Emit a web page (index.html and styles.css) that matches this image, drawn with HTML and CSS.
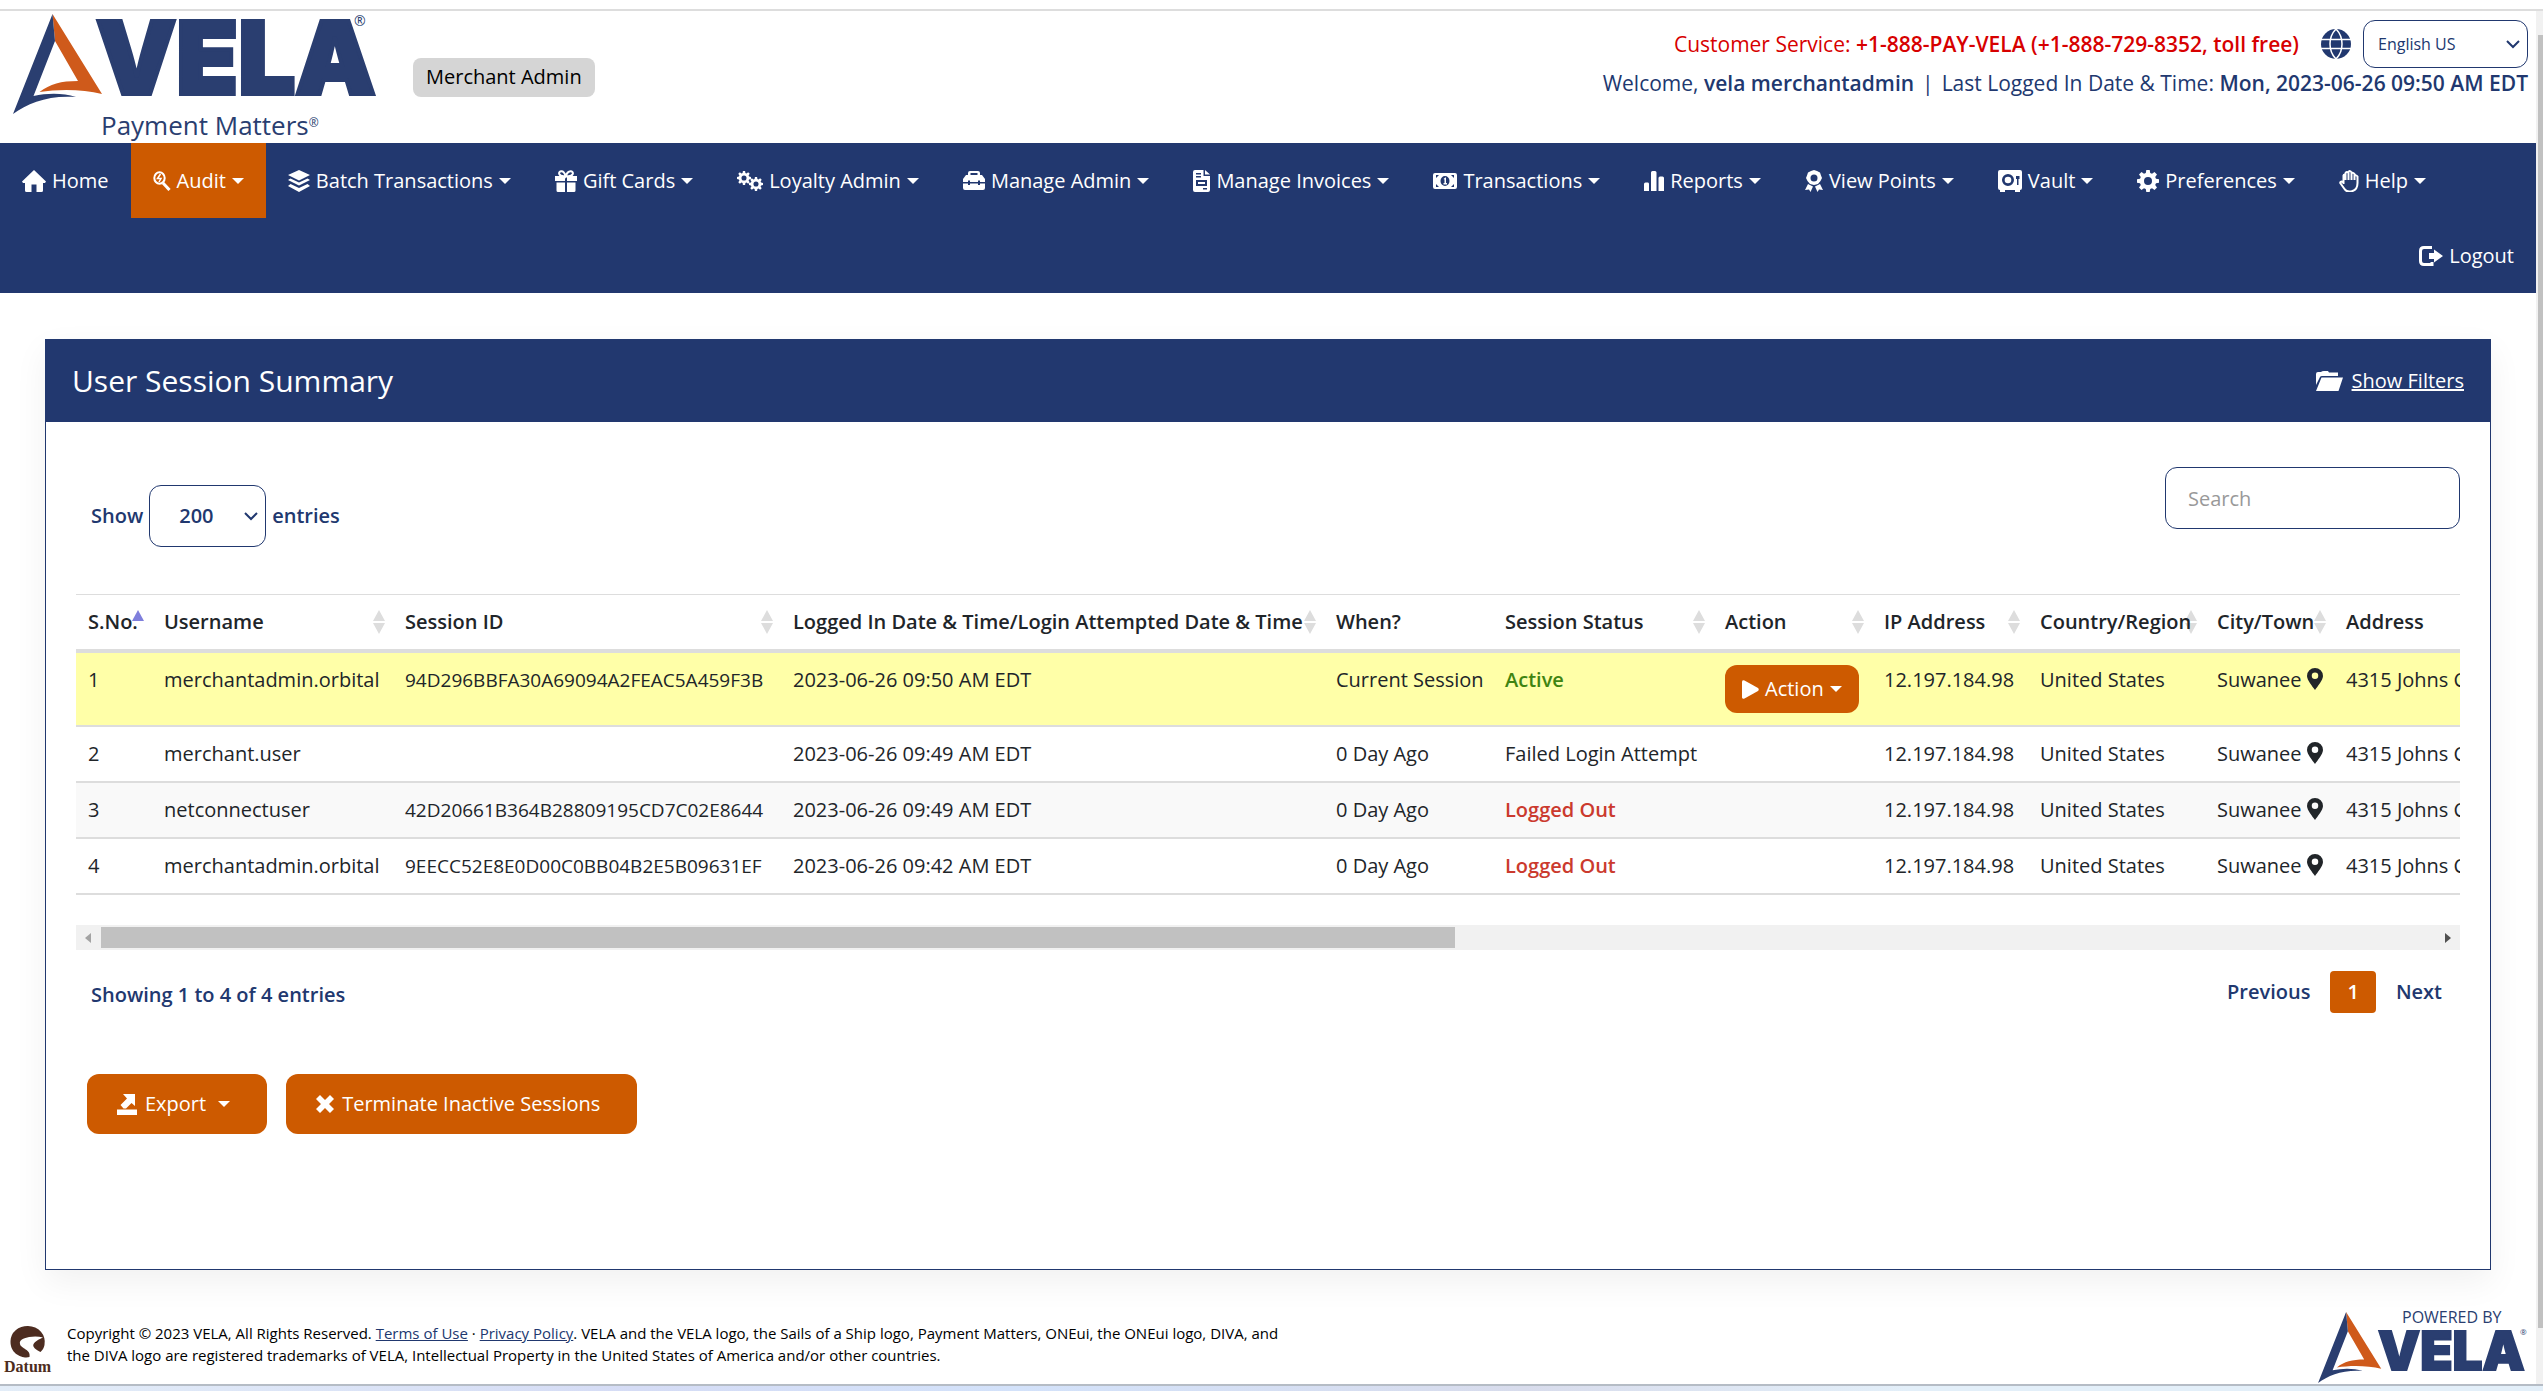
FILE: index.html
```html
<!DOCTYPE html>
<html lang="en">
<head>
<meta charset="utf-8">
<title>User Session Summary</title>
<link rel="stylesheet" href="styles.css">
</head>
<body>
<svg class="sprite" aria-hidden="true">
  <symbol id="home" viewBox="0 0 24 22"><path d="M12 0 24 11.500 23 13H21V20.500Q21 22 19.500 22H14.500V14.500H9.500V22H4.500Q3 22 3 20.500V13H1L0 11.500Z"/></symbol>
  <symbol id="audit" viewBox="0 0 18 20"><ellipse cx="6.500" cy="7" rx="5.200" ry="5.700" fill="none" stroke="currentColor" stroke-width="2"/><path d="M10 12 16.500 19" stroke="currentColor" stroke-width="3"/><path d="M7.500 3 4.500 7.500H8L6 11" fill="none" stroke="currentColor" stroke-width="1.500"/></symbol>
  <symbol id="layers" viewBox="0 0 22 22"><path d="M11 0 22 5 11 10.500 0 5ZM2.500 8.500 11 12.500 19.500 8.500 22 10 11 15.500 0 10ZM2.500 14 11 18 19.500 14 22 16 11 22 0 16Z"/></symbol>
  <symbol id="gift" viewBox="0 0 22 22"><path d="M0 6H22V11H12V7.500H10V11H0ZM1.500 12.500H10V22H3Q1.500 22 1.500 20.500ZM12 12.500H20.500V20.500Q20.500 22 19 22H12Z"/><path d="M10.500 6C3 7 3 1.500 6 1.200S10 4 10.500 6C12 3 13 1 16 1.200S19 7 11.500 6" fill="none" stroke="currentColor" stroke-width="2"/></symbol>
  <symbol id="gear" viewBox="0 0 22 22"><path fill-rule="evenodd" d="M9.300 0h3.400l.5 3 1.800.8L17.500 2 20 4.500 18.200 7l.8 1.800 3 .5v3.400l-3 .5-.8 1.800L20 17.500 17.500 20 15 18.200l-1.800.8-.5 3H9.300l-.5-3L7 18.200 4.500 20 2 17.500 3.800 15 3 13.200l-3-.5V9.300l3-.5L3.800 7 2 4.500 4.500 2 7 3.800 8.800 3ZM11 7a4 4 0 1 0 0 8 4 4 0 0 0 0-8Z"/></symbol>
  <symbol id="gears" viewBox="0 0 26 20"><use href="#gear" x="0" y="0" width="14" height="14"/><use href="#gear" x="12" y="6" width="14" height="14"/></symbol>
  <symbol id="case" viewBox="0 0 22 19"><path fill-rule="evenodd" d="M5 4V2Q5 0 7 0H15Q17 0 17 2V4H19L22 8V11H17V9.500H15V11H7V9.500H5V11H0V8L3 4ZM7.500 4H14.500V2H7.500ZM0 12.500H5V14H7V12.500H15V14H17V12.500H22V17Q22 19 20 19H2Q0 19 0 17Z"/></symbol>
  <symbol id="invoice" viewBox="0 0 17 22"><path fill-rule="evenodd" d="M2 0H10.500V6H17V20Q17 22 15 22H2Q0 22 0 20V2Q0 0 2 0ZM3 3V4.500H8V3ZM3 6V7.500H8V6ZM3 10V16H14V10ZM5 12H12V14H5ZM10 18V19.500H14V18ZM12 0 17 4.500H12Z"/></symbol>
  <symbol id="money" viewBox="0 0 24 16"><path fill-rule="evenodd" d="M2 0H22Q24 0 24 2V14Q24 16 22 16H2Q0 16 0 14V2Q0 0 2 0ZM3 2V5L6 2ZM21 2H18L21 5ZM3 14H6L3 11ZM21 14V11L18 14ZM12 3A4.500 5 0 1 0 12 13 4.500 5 0 0 0 12 3Z"/><path d="M10.500 6 12.200 4.500H13V10H14V11.500H10.500V10H11.500V6.500Z"/></symbol>
  <symbol id="bars" viewBox="0 0 20 20"><path d="M0 13Q0 11.500 1.500 11.500H4Q5 11.500 5 13V20H0ZM7 1.500Q7 0 8.500 0H11Q12.500 0 12.500 1.500V20H7ZM14.500 7Q14.500 5.500 16 5.500H18.500Q20 5.500 20 7V20H14.500Z"/></symbol>
  <symbol id="award" viewBox="0 0 18 22"><path fill-rule="evenodd" d="M9 0 12 1 15 2.500 16 5.500 17 8 15.500 11 13 14 9 15 5 14 2.500 11 1 8 2 5.500 3 2.500 6 1ZM9 4.500A3.500 3.500 0 1 0 9 11.500 3.500 3.500 0 0 0 9 4.500ZM3 14 8 16.500 5.500 22 4 19.500 0 20ZM15 14 18 20 14 19.500 12.500 22 10 16.500Z"/></symbol>
  <symbol id="vault" viewBox="0 0 24 22"><path fill-rule="evenodd" d="M2 0H22Q24 0 24 2V18Q24 20 22 20V22H17V20H7V22H2V20Q0 20 0 18V2Q0 0 2 0ZM10 4A6 6 0 1 0 10 16 6 6 0 0 0 10 4ZM18 6V9H19V15H20.500V9H21.500V6Z"/><circle cx="10" cy="10" r="3.300"/></symbol>
  <symbol id="hand" viewBox="0 0 20 22"><path d="M4.500 14V5.500Q5 4 6.500 5.500V10M6.500 9V3Q8 1 9.500 3V10M9.500 9V2Q11 0 12.500 2.500V10M12.500 9V3.500Q14 2 15.500 4V10M15.500 9V6Q17 4.500 18.500 6.500V13C18.500 23 8 23 5.500 19L1.200 13Q1 10.500 4.500 12.500" fill="none" stroke="currentColor" stroke-width="2"/></symbol>
  <symbol id="logout" viewBox="0 0 24 20"><path d="M13 1.500H5Q1.500 1.500 1.500 5V15Q1.500 18.500 5 18.500H13V16" fill="none" stroke="currentColor" stroke-width="3"/><path d="M10 7H15V3.500L24 10 15 16.500V13H10Z"/></symbol>
  <symbol id="globe" viewBox="0 0 30 30"><circle cx="15" cy="15" r="15"/><path d="M0 10.500H30M0 19.500H30M15 0C7 8 7 22 15 30C23 22 23 8 15 0Z" fill="none" stroke="#fff" stroke-width="1.500"/></symbol>
  <symbol id="folder" viewBox="0 0 27 20"><path d="M0 14V3Q0 1 2 1H5Q6 0 8 0H12L13 1.500H22V5H6Q4.500 5 4 6ZM5.500 6.500H27L22.500 20H0Z"/></symbol>
  <symbol id="pin" viewBox="0 0 16 22"><path fill-rule="evenodd" d="M8 0A8 8 0 0 1 16 8C16 12 10.500 18.500 8 22 5.500 18.500 0 12 0 8A8 8 0 0 1 8 0ZM8 4.500A3.200 3.200 0 1 0 8 11 3.200 3.200 0 0 0 8 4.500Z"/></symbol>
  <symbol id="play" viewBox="0 0 17 19"><path d="M0 1.500Q.5-.5 2.500.500L16 8Q17.500 9.500 16 11L2.500 18.500Q.5 19.500 0 17.500Z"/></symbol>
  <symbol id="export" viewBox="0 0 20 21"><path d="M0 15.500H20V21H0ZM6 0H18V12L14.500 9 9 14.500H6.500L3.500 11 10 4.500Z"/></symbol>
  <symbol id="cross" viewBox="0 0 18 18"><path d="M0 4 4 0 9 5 14 0 18 4 13 9 18 14 14 18 9 13 4 18 0 14 5 9Z"/></symbol>
  <symbol id="sail" viewBox="0 0 90 100"><path fill="#cf5a1b" d="M39.500 0 89 80C70 75 45 75 26.500 78 37 70 48 67 65 67L42 27Z"/><path fill="#2a3e70" d="M39.500 0 42 27 20.500 82C35 79 50 79 63 83 35 81 15 89 0 100Z"/></symbol>
</svg>

<div class="window">
  <div class="page">
    <header class="top">
      <svg class="logo" viewBox="0 0 370 130" role="img" aria-label="VELA Payment Matters">
        <use href="#sail" x="0" y="3" width="90" height="100"/>
        <text class="logo-word" x="83" y="83" font-size="101" stroke-width="4">VELA</text>
        <text class="logo-tag" x="88" y="124" font-size="26">Payment Matters<tspan font-size="12" dy="-8">®</tspan></text>
        <text class="logo-tag" x="341" y="15" font-size="14">®</text>
      </svg>
      <span class="role">Merchant Admin</span>
      <div class="account">
        <div class="service">
          <span class="phone">Customer Service: <b>+1-888-PAY-VELA (+1-888-729-8352, toll free)</b></span>
          <svg class="globe"><use href="#globe"/></svg>
          <select class="language" aria-label="Language"><option>English US</option></select>
        </div>
        <p class="welcome">Welcome, <b>vela merchantadmin</b><span class="bar">|</span>Last Logged In Date &amp; Time: <b>Mon, 2023-06-26 09:50 AM EDT</b></p>
      </div>
    </header>

    <nav class="menu">
      <a href="#"><svg width="24" height="22"><use href="#home"/></svg>Home</a>
      <a href="#" class="active"><svg width="18" height="20"><use href="#audit"/></svg>Audit<i class="caret"></i></a>
      <a href="#"><svg width="22" height="22"><use href="#layers"/></svg>Batch Transactions<i class="caret"></i></a>
      <a href="#"><svg width="22" height="22"><use href="#gift"/></svg>Gift Cards<i class="caret"></i></a>
      <a href="#"><svg width="26" height="20"><use href="#gears"/></svg>Loyalty Admin<i class="caret"></i></a>
      <a href="#"><svg width="22" height="19"><use href="#case"/></svg>Manage Admin<i class="caret"></i></a>
      <a href="#"><svg width="17" height="22"><use href="#invoice"/></svg>Manage Invoices<i class="caret"></i></a>
      <a href="#"><svg width="24" height="16"><use href="#money"/></svg>Transactions<i class="caret"></i></a>
      <a href="#"><svg width="20" height="20"><use href="#bars"/></svg>Reports<i class="caret"></i></a>
      <a href="#"><svg width="18" height="22"><use href="#award"/></svg>View Points<i class="caret"></i></a>
      <a href="#"><svg width="24" height="22"><use href="#vault"/></svg>Vault<i class="caret"></i></a>
      <a href="#"><svg width="22" height="22"><use href="#gear"/></svg>Preferences<i class="caret"></i></a>
      <a href="#"><svg width="20" height="22"><use href="#hand"/></svg>Help<i class="caret"></i></a>
      <div class="menu-end"><a href="#"><svg width="24" height="20"><use href="#logout"/></svg>Logout</a></div>
    </nav>

    <main class="card">
      <div class="card-head">
        <h1>User Session Summary</h1>
        <a href="#" class="filters"><svg width="27" height="20"><use href="#folder"/></svg><span>Show Filters</span></a>
      </div>
      <div class="card-body">
        <div class="tools">
          <label class="length">Show <select class="count"><option>200</option></select> entries</label>
          <input class="search" type="search" placeholder="Search" aria-label="Search">
        </div>
        <div class="table-wrap">
          <table>
            <colgroup><col class="c-no"><col class="c-user"><col class="c-id"><col class="c-date"><col class="c-when"><col class="c-status"><col class="c-action"><col class="c-ip"><col class="c-country"><col class="c-city"><col class="c-address"></colgroup>
            <thead>
              <tr><th class="asc">S.No.</th><th class="sort">Username</th><th class="sort">Session ID</th><th class="sort">Logged In Date &amp; Time/Login Attempted Date &amp; Time</th><th>When?</th><th class="sort">Session Status</th><th class="sort">Action</th><th class="sort">IP Address</th><th class="sort">Country/Region</th><th class="sort">City/Town</th><th>Address</th></tr>
            </thead>
            <tbody>
              <tr class="current"><td>1</td><td>merchantadmin.orbital</td><td class="hash">94D296BBFA30A69094A2FEAC5A459F3B</td><td>2023-06-26 09:50 AM EDT</td><td>Current Session</td><td class="ok">Active</td><td><button class="btn action" type="button"><svg width="17" height="19"><use href="#play"/></svg>Action<i class="caret"></i></button></td><td>12.197.184.98</td><td>United States</td><td>Suwanee <svg class="pin"><use href="#pin"/></svg></td><td>4315 Johns Creek</td></tr>
              <tr><td>2</td><td>merchant.user</td><td></td><td>2023-06-26 09:49 AM EDT</td><td>0 Day Ago</td><td>Failed Login Attempt</td><td></td><td>12.197.184.98</td><td>United States</td><td>Suwanee <svg class="pin"><use href="#pin"/></svg></td><td>4315 Johns Creek</td></tr>
              <tr><td>3</td><td>netconnectuser</td><td class="hash">42D20661B364B28809195CD7C02E8644</td><td>2023-06-26 09:49 AM EDT</td><td>0 Day Ago</td><td class="out">Logged Out</td><td></td><td>12.197.184.98</td><td>United States</td><td>Suwanee <svg class="pin"><use href="#pin"/></svg></td><td>4315 Johns Creek</td></tr>
              <tr><td>4</td><td>merchantadmin.orbital</td><td class="hash">9EECC52E8E0D00C0BB04B2E5B09631EF</td><td>2023-06-26 09:42 AM EDT</td><td>0 Day Ago</td><td class="out">Logged Out</td><td></td><td>12.197.184.98</td><td>United States</td><td>Suwanee <svg class="pin"><use href="#pin"/></svg></td><td>4315 Johns Creek</td></tr>
            </tbody>
          </table>
        </div>
        <div class="hbar"><i class="arrow left"></i><div class="hbar-track"><div class="hbar-thumb"></div></div><i class="arrow right"></i></div>
        <div class="summary">
          <p>Showing 1 to 4 of 4 entries</p>
          <div class="pager"><a href="#">Previous</a><a href="#" class="on">1</a><a href="#">Next</a></div>
        </div>
        <div class="actions">
          <button class="btn" type="button"><svg width="20" height="21"><use href="#export"/></svg>Export<i class="caret wide"></i></button>
          <button class="btn" type="button"><svg width="18" height="18"><use href="#cross"/></svg>Terminate Inactive Sessions</button>
        </div>
      </div>
    </main>

    <footer class="foot">
      <svg class="datum" viewBox="0 0 48 48" role="img" aria-label="Datum">
        <path fill="#4d2c20" d="M24 0A17 16 0 0 1 40.500 19C40 22 38.500 24 36.500 26 29 22 24 18 39 11.500 29 9 14 12 16 18 17 23 27 23 25.500 31 20 33 6 29 6.500 15A17 15 0 0 1 24 0Z"/>
        <text class="datum-word" x="0" y="46" font-size="16">Datum</text>
      </svg>
      <p class="legal">Copyright © 2023 VELA, All Rights Reserved. <a href="#">Terms of Use</a> · <a href="#">Privacy Policy</a>. VELA and the VELA logo, the Sails of a Ship logo, Payment Matters, ONEui, the ONEui logo, DIVA, and<br>the DIVA logo are registered trademarks of VELA, Intellectual Property in the United States of America and/or other countries.</p>
      <svg class="powered" viewBox="0 0 212 72" role="img" aria-label="Powered by VELA">
        <use href="#sail" x="0" y="0" width="64" height="71"/>
        <text class="logo-tag" x="84" y="11" font-size="16">POWERED BY</text>
        <text class="logo-word" x="60" y="58" font-size="53" stroke-width="2">VELA</text>
        <text class="logo-tag" x="202" y="23" font-size="8">®</text>
      </svg>
    </footer>
  </div>
  <div class="vbar"><div class="vbar-thumb"></div></div>
</div>
<div class="desk"></div>
</body>
</html>
```
FILE: styles.css
```css
* { box-sizing: border-box; }
body {
  margin: 0;
  padding-top: 9px;
  background: #fff;
  color: #212529;
  font: 500 20px/30px "Open Sans", "Noto Sans", sans-serif;
}
b { font-weight: 600; }
p, h1 { margin: 0; font-weight: inherit; }
svg { fill: currentColor; flex: none; }
.sprite { display: none; }
select, input, button { font: inherit; color: inherit; }

.window { display: flex; border-top: 2px solid #ddd; border-bottom: 2px solid #b5bcc5; }
.page { flex: 1; min-width: 0; }
.vbar { width: 7px; padding: 24px 0 56px 2px; background: #f1f1f1; }
.vbar-thumb { height: 100%; background: #c1c1c1; }
.desk { height: 5px; background: linear-gradient(90deg, #e3edf8, #d5dcf5 25%, #d3e2fa 40%, #d8dcec 60%, #e3eff9 75%); }

.top { display: flex; align-items: flex-start; height: 132px; padding: 0 8px 0 13px; }
.logo { width: 370px; height: 130px; overflow: visible; }
.logo-word { font-family: Inter, Lato, sans-serif; font-weight: 900; fill: #2a3e70; stroke: #2a3e70; }
.logo-tag { font-family: "Open Sans", sans-serif; font-weight: 500; fill: #2a3e70; }
.role { margin: 47px 0 0 30px; padding: 4px 13px 5px; border-radius: 8px; background: #d5d5d5; color: #000; }
.account { margin-left: auto; padding-top: 9px; color: #21386f; text-align: right; }
.service { display: flex; align-items: center; justify-content: flex-end; }
.phone { color: #d70000; font-size: 21px; }
.globe { width: 30px; height: 30px; margin: 0 12px 0 22px; }
.language, .count {
  appearance: none;
  border: 1px solid #21386f;
  border-radius: 12px;
  background: #fff url("data:image/svg+xml,%3Csvg xmlns='http://www.w3.org/2000/svg' viewBox='0 0 14 9'%3E%3Cpath d='M1 1 7 7 13 1' fill='none' stroke='%2321386f' stroke-width='2'/%3E%3C/svg%3E") no-repeat right 7px center / 14px 9px;
}
.language { width: 165px; height: 48px; padding: 0 14px; font-size: 16px; }
.welcome { font-size: 21px; }
.bar { margin: 0 8px; }

.menu { display: flex; flex-wrap: wrap; background: #22386f; }
.menu a { display: flex; align-items: center; gap: 6px; height: 75px; padding: 0 22px; color: #fff; text-decoration: none; white-space: nowrap; }
.menu .active { background: #cd5a00; }
.menu-end { display: flex; justify-content: flex-end; width: 100%; }
.caret { border: 6px solid transparent; border-top-color: currentColor; border-bottom: 0; }

.card { margin: 46px 45px 0; border: 1px solid #21386f; box-shadow: 0 12px 32px rgba(0, 0, 0, .06); }
.card-head { display: flex; align-items: center; justify-content: space-between; height: 82px; padding: 0 26px; background: #22386f; color: #fff; }
h1 { font-size: 30px; }
.filters { display: flex; align-items: center; gap: 9px; color: inherit; }
.card-body { padding: 45px 30px 135px; }

.tools { display: flex; justify-content: space-between; align-items: flex-start; margin-bottom: 47px; color: #21386f; }
.length { display: flex; align-items: center; gap: 6px; padding: 18px 0 0 15px; font-weight: 600; }
.count { width: 117px; height: 62px; padding: 0 29px; }
.search { width: 295px; height: 62px; padding: 0 22px; border: 1px solid #21386f; border-radius: 12px; background: #fff; }
.search::placeholder { color: #999; opacity: 1; }

.table-wrap { overflow: hidden; border-top: 1px solid #ddd; }
table { width: 3940px; table-layout: fixed; border-collapse: collapse; }
.c-no { width: 76px; }
.c-user { width: 241px; }
.c-id { width: 388px; }
.c-date { width: 543px; }
.c-when { width: 169px; }
.c-status { width: 220px; }
.c-action { width: 159px; }
.c-ip { width: 156px; }
.c-country { width: 177px; }
.c-city { width: 129px; }
th, td { padding: 12px 0 12px 12px; text-align: left; vertical-align: top; white-space: nowrap; }
th { position: relative; font-weight: 600; border-bottom: 4px solid #ddd; }
td { border-bottom: 2px solid #ddd; }
.hash { font-size: 19px; }
th.sort::after, th.asc::after {
  content: "";
  position: absolute;
  top: 15px;
  right: 8px;
  z-index: -1;
  width: 12px;
  height: 24px;
  background: #ddd;
  clip-path: polygon(50% 0, 100% 46%, 0 46%, 0 54%, 100% 54%, 50% 100%, 0 54%, 0 46%);
}
th.asc::after { background: #7f7fdc; clip-path: polygon(50% 0, 100% 46%, 0 46%); }
tbody tr:nth-child(odd) { background: #f9f9f9; }
tbody tr.current { background: #ffffa8; }
.ok { color: #3f8412; font-weight: 600; }
.out { color: #cb3a2e; font-weight: 600; }
.pin { width: 16px; height: 22px; vertical-align: -3px; }

.btn { display: flex; align-items: center; gap: 8px; height: 60px; padding: 0 37px 0 30px; border: 0; border-radius: 12px; background: #cd5a00; color: #fff; white-space: nowrap; }
.action { gap: 6px; height: 48px; padding: 0 17px; }
.wide { margin-left: 4px; }

.hbar { display: flex; align-items: center; gap: 10px; height: 25px; margin: 30px 0 21px; padding: 0 9px; background: #f1f1f1; }
.hbar-track { flex: 1; }
.hbar-thumb { width: 58%; height: 21px; background: #c1c1c1; }
.arrow { border: 5px solid transparent; }
.left { border-right: 6px solid #a3a3a3; border-left: 0; }
.right { border-left: 6px solid #505050; border-right: 0; }
.summary { display: flex; justify-content: space-between; align-items: center; padding: 0 18px 0 15px; color: #21386f; font-weight: 600; }
.summary p { padding-top: 6px; }
.pager { display: flex; align-items: center; gap: 20px; }
.pager a { color: inherit; text-decoration: none; }
.pager .on { padding: 6px 17px; border-radius: 4px; background: #cd5a00; color: #fff; }
.actions { display: flex; gap: 19px; padding: 61px 0 0 11px; }

.foot { display: flex; align-items: flex-start; padding: 42px 6px 0 4px; color: #000; }
.datum { width: 48px; height: 48px; margin-top: 14px; overflow: visible; }
.datum-word { font-family: "Liberation Serif", serif; font-weight: 700; fill: #4d2c20; }
.legal { flex: 1; padding: 10px 0 0 15px; font-size: 15px; font-weight: 400; line-height: 22px; }
.legal a { color: #21386f; }
.powered { width: 212px; height: 72px; overflow: visible; }
```
